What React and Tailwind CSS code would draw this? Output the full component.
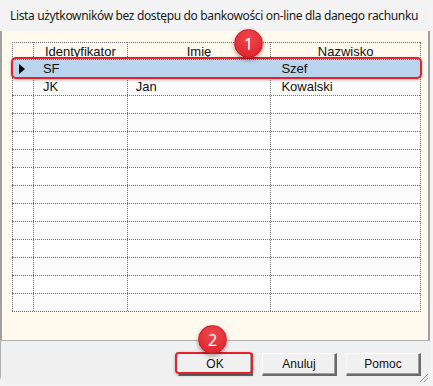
import React from "react";

const columns = [
  { key: "ind", label: "", w: "w-[21px]" },
  { key: "id", label: "Identyfikator", w: "w-[94px]" },
  { key: "imie", label: "Imię", w: "w-[144px]" },
  { key: "nazwisko", label: "Nazwisko", w: "w-[150px]" },
];

const rows = [
  { id: "SF", imie: "", nazwisko: "Szef", selected: true },
  { id: "JK", imie: "Jan", nazwisko: "Kowalski" },
  ...Array.from({ length: 12 }, () => ({ id: "", imie: "", nazwisko: "" })),
];

function Badge({ n, className }) {
  return (
    <div
      className={
        "absolute w-[29px] h-[29px] rounded-full bg-[radial-gradient(circle_at_50%_30%,#f0474d,#d91f27)] border border-[#c81a22] shadow-[0_2px_4px_rgba(0,0,0,0.35)] flex items-center justify-center text-white text-[16px] leading-none font-['Noto_Sans',sans-serif]" +
        " " +
        className
      }
    >
      {n}
    </div>
  );
}

function Button({ children }) {
  return (
    <div className="w-[75px] h-[23px] bg-[#f0f0f0] border-t border-l border-t-white border-l-white border-b-2 border-r-2 border-b-[#696969] border-r-[#696969] shadow-[inset_-1px_-1px_0_#a0a0a0] flex items-center justify-center text-[12px] text-[#111]">
      {children}
    </div>
  );
}

export default function App() {
  return (
    <div className="w-[433px] h-[386px] bg-[#f4f4f4] relative overflow-hidden font-['Liberation_Sans',Arial,sans-serif]">
      <div className="w-[430px] h-[384px] rounded-[8px] overflow-hidden bg-[#f3f3f3] flex flex-col">
        {/* TITLE */}
        <div className="h-[31px] shrink-0 px-[10px] flex items-center text-[12px] tracking-[-0.35px] text-[#1a1a1a] font-['Noto_Sans',sans-serif] whitespace-nowrap">
          Lista użytkowników bez dostępu do bankowości on-line dla danego rachunku
        </div>

        {/* CLIENT */}
        <div className="h-[309px] shrink-0 bg-[#fff9ee] border-x-2 border-[#a0a0a0] pt-[11px] pl-[10px]">
          <div className="w-[409px] border-r border-b border-dotted border-[#6e6e6e] text-[13px] text-[#111]">
            {/* header */}
            <div className="flex h-[17px]">
              {columns.map((c) => (
                <div
                  key={c.key}
                  className={c.w + " border-t border-l border-dotted border-[#6e6e6e] flex items-center justify-center leading-none"}
                >
                  {c.label}
                </div>
              ))}
            </div>
            {rows.map((r, i) => (
              <div
                key={i}
                className={
                  "flex h-[18px] border-t border-dotted border-[#6e6e6e] " +
                  (r.selected ? "bg-[#b9d4ec]" : i % 2 === 1 ? "bg-[#fbfbfb]" : "bg-white")
                }
              >
                <div className="w-[21px] border-l border-dotted border-[#6e6e6e] flex items-center justify-center">
                  {r.selected && (
                    <div className="w-0 h-0 border-y-[5px] border-y-transparent border-l-[6px] border-l-black ml-[-1px]" />
                  )}
                </div>
                <div className={"w-[94px] pl-[9px] flex items-center leading-none " + (r.selected ? "border-l border-transparent" : "border-l border-dotted border-[#6e6e6e]")}>
                  {r.id}
                </div>
                <div className={"w-[144px] pl-[8px] flex items-center leading-none " + (r.selected ? "border-l border-transparent" : "border-l border-dotted border-[#6e6e6e]")}>
                  {r.imie}
                </div>
                <div className={"w-[150px] pl-[10px] flex items-center leading-none " + (r.selected ? "border-l border-transparent" : "border-l border-dotted border-[#6e6e6e]")}>
                  {r.nazwisko}
                </div>
              </div>
            ))}
          </div>
        </div>

        {/* BUTTON BAR */}
        <div className="flex-1 bg-[#f0f0f0] border-t border-[#a0a0a0] border-l border-[#b0b0b0] flex justify-end items-start pt-[12px] pr-[9px] gap-[9px] relative">
          <div className="relative">
            <Button>OK</Button>
            <div className="absolute -left-[3px] -top-[1px] w-[78px] h-[22px] rounded-[4px] border-2 border-[#e3222b] shadow-[0_1px_3px_rgba(0,0,0,0.3)]" />
          </div>
          <Button>Anuluj</Button>
          <Button>Pomoc</Button>
          <svg className="absolute right-[1px] bottom-[1px]" width="12" height="12" viewBox="0 0 12 12">
            <path d="M11 3 L3 11 M11 7 L7 11" stroke="#9a9a9a" strokeWidth="1" />
          </svg>
        </div>
      </div>

      {/* selected row annotation */}
      <div className="absolute left-[11px] top-[57px] w-[411px] h-[22px] rounded-[5px] border-2 border-[#e3222b] shadow-[0_1px_3px_rgba(0,0,0,0.3)]" />
      <Badge n="1" className="left-[234px] top-[29px]" />
      <Badge n="2" className="left-[198px] top-[325px]" />
    </div>
  );
}
